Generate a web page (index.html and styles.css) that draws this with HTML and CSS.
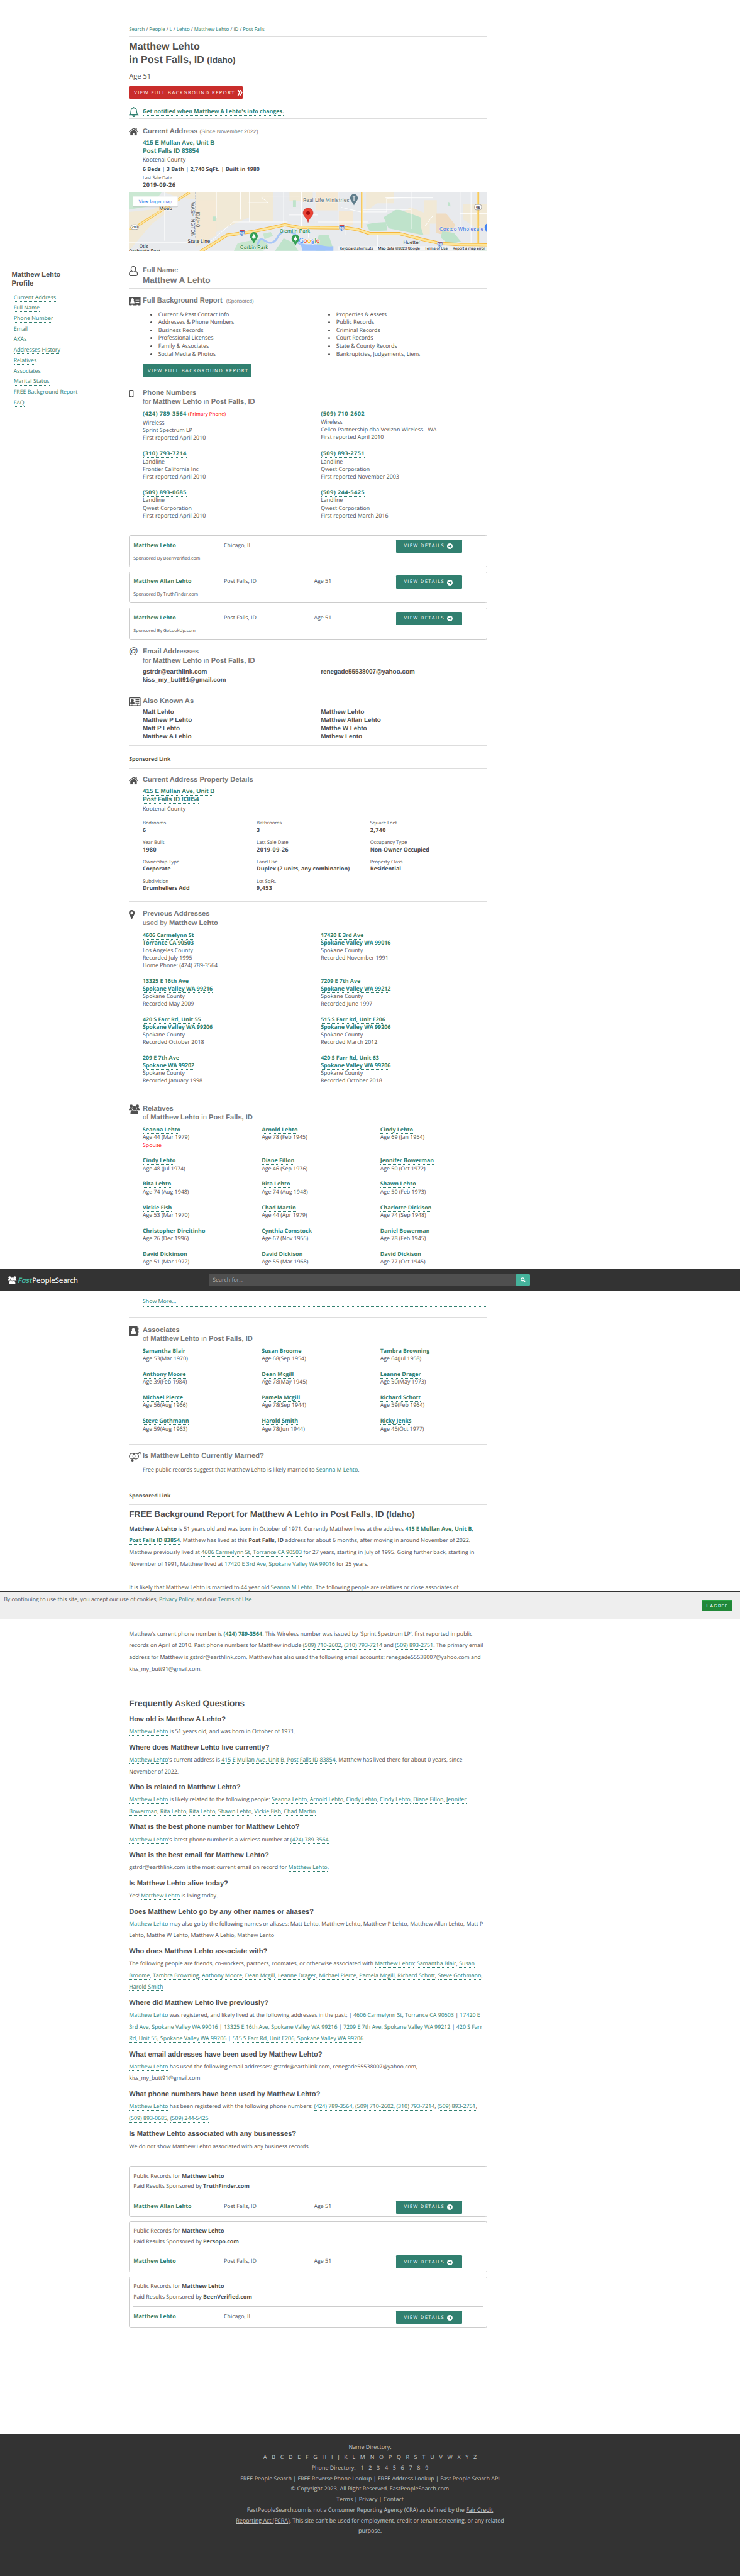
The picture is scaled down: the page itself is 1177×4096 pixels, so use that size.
FILE: index.html
```html
<!DOCTYPE html>
<html lang="en">
<head>
<meta charset="utf-8">
<title>Matthew Lehto in Post Falls, ID</title>
<link rel="stylesheet" href="styles.css">
</head>
<body>
<svg class="defs" width="0" height="0">
  <symbol id="home" viewBox="0 0 24 20"><path d="M12 0 0 10l1.4 1.7L12 3l10.600 8.700L24 10l-3.600-3.100V1h-3.400v3.100z"/><path d="M12 4.600 3.600 11.400V20h6.200v-6h4.400v6h6.200v-8.600z"/></symbol>
  <symbol id="users" viewBox="0 0 28 26"><circle cx="6" cy="4.500" r="4"/><circle cx="22" cy="4.500" r="4"/><path d="M0 15c0-4 2-6 6-6 1 0 1.500.2 1.500.2-.3 3 .5 4.800 1.500 5.800H1.500C.5 15 0 15 0 15zM28 15c0-4-2-6-6-6-1 0-1.500.2-1.500.2.3 3-.5 4.800-1.500 5.800h7.500c1 0 1.500 0 1.500 0z"/><circle cx="14" cy="10" r="5.500"/><path d="M4 23c0-5 2-8 5.500-8 2 2 7 2 9 0C22 15 24 18 24 23c0 2-1 3-3 3H7c-2 0-3-1-3-3z"/></symbol>
  <symbol id="arrow" viewBox="0 0 14 14"><circle class="disc" cx="7" cy="7" r="7"/><path class="tip" d="M3.500 7h6M7 3.800 10.200 7 7 10.200"/></symbol>
</svg>

<div class="layout">
<aside class="side">
  <h4>Matthew Lehto<br>Profile</h4>
  <ul>
    <li><a>Current Address</a></li><li><a>Full Name</a></li><li><a>Phone Number</a></li><li><a>Email</a></li><li><a>AKAs</a></li><li><a>Addresses History</a></li><li><a>Relatives</a></li><li><a>Associates</a></li><li><a>Marital Status</a></li><li><a>FREE Background Report</a></li><li><a>FAQ</a></li>
  </ul>
</aside>
<main class="main">

<nav class="block crumbs"><a>Search</a> / <a>People</a> / <a>L</a> / <a>Lehto</a> / <a>Matthew Lehto</a> / <a>ID</a> / <a>Post Falls</a></nav>

<header class="block title"><h1>Matthew Lehto<br>in Post Falls, ID <small>(Idaho)</small></h1></header>

<section class="block intro">
  <p class="age">Age 51</p>
  <a class="btn red"><span>VIEW FULL BACKGROUND REPORT</span>
    <svg viewBox="0 0 14 14"><path d="M1 0h3.500l4 7-4 7H1l4-7zM6.500 0H10l4 7-4 7H6.500l4-7z"/></svg></a>
  <div class="notify">
    <svg viewBox="0 0 25 26"><path d="M2 20.500c3-3 3-6 3.200-10C5.500 5.500 8 2.500 12.500 2.500s7 3 7.300 8c.2 4 .2 7 3.200 10z"/><path d="M12.500 2.500V0"/><path class="fill" d="M8.500 21.500h8c0 3-2 4.500-4 4.500s-4-1.500-4-4.500z"/></svg>
    <a>Get notified when Matthew A Lehto's info changes.</a>
  </div>
</section>

<section class="block current">
  <div class="row">
    <div class="ico"><svg class="i-home"><use href="#home"/></svg></div>
    <div class="body">
      <h2>Current Address <span class="note">(Since November 2022)</span></h2>
      <p class="addr"><a>415 E Mullan Ave, Unit B</a><br><a>Post Falls ID 83854</a></p>
      <p class="county">Kootenai County</p>
      <p class="facts"><b>6 Beds</b> <i>|</i> <b>3 Bath</b> <i>|</i> <b>2,740 SqFt.</b> <i>|</i> <b>Built in 1980</b></p>
      <p class="sale">Last Sale Date</p>
      <p class="date">2019-09-26</p>
    </div>
  </div>
  <svg class="map" viewBox="0 0 922 150" preserveAspectRatio="none">
    <rect width="922" height="150" fill="#e8eaed"/>
    <path fill="#f1e9d6" d="M0 50 60 44 92 30 92 56 60 80 0 150zM225 0H310V64L268 82 225 102 190 128H172V0zM310 0H372V74H310zM413 0h60v22h-60zM610 0h72v28h-44l-28 20zM690 60l34-22 50 20v50h-40zM760 20h32v60h-32zM860 30h62v60h-30l-32-20zM92 0h78v18l-44-6z"/>
    <path fill="#f4e8d4" d="M480 0h58v46h-58zM540 48h36v36h-36zM172 20h53v90l-53 30z"/>
    <path fill="#efdcc2" d="M790 54h26l24 30-20 28-30-8z"/>
    <path fill="#cbe8d3" d="M0 0h84l-24 30-10 6L0 44z"/>
    <path fill="#bfe3cb" d="M655 64 690 42l60 22 2 28 6 18-90-18zM610 82l22-4 30-2 2 22-44 2zM806 100l30 4 18 22-30 8-22-18zM488 110h26l10 30-20 10h-24zM398 118l24 10 14 22h-60zM215 62h9v11h-9zM422 20h8v17h-8zM820 24l6 2 1 10-6-1zM900 138h22v12h-22z"/>
    <path fill="#c8e6cf" d="M280 130l60-12 20 18-14 14h-76zM345 106l20-4 6 10-22 8z"/>
    <path fill="none" stroke="#a9c7f7" stroke-width="5" d="M330 140c4-24 12-22 20-16 12 10 26 6 34-12 8-14 28-12 42-6 10 6 6 20 10 24l14 8"/>
    <path fill="#9fc3fb" d="M442 130c14 6 30 2 42 4 16 2 26 6 42 4v12h-80z"/>
    <g fill="none" stroke="#fff" stroke-width="1.500">
      <path d="M225 0v66M287 0v70M310 0v76M340 12h100M340 12l18 14h-50M398 0v100M444 0v90M481 0v84M412 58h74M412 43h60M538 0v92M545 38l50 12 68 0 0-35 60-2M600 44h126v-44M726 44v50M660 14h122M782 0v60l-20 26M268 76h140M268 76l-60 52H0M92 0v124M880 0v130l-20 0M852 0v90M922 54h-70M640 108v42M486 76h130M556 80v30M462 92v24"/>
    </g>
    <path fill="none" stroke="#9aa0a6" stroke-width="1" stroke-dasharray="4 3" d="M171 0v118"/>
    <g fill="none" stroke-linejoin="round">
      <path stroke="#f7c24a" stroke-width="6" d="M0 94 22 86 156 0M600 0v92M898 0v136"/>
      <path stroke="#fbe5a6" stroke-width="3" d="M0 94 22 86 156 0M600 0v92M898 0v136"/>
      <path stroke="#f5b63c" stroke-width="8" d="M184 152 252 110 316 101 370 90 401 83 440 90 559 91 590 96 620 106 697 106 760 122 802 131 850 134 922 135"/>
      <path stroke="#fde69b" stroke-width="5" d="M184 152 252 110 316 101 370 90 401 83 440 90 559 91 590 96 620 106 697 106 760 122 802 131 850 134 922 135"/>
    </g>
    <g fill="#4274c4" stroke="#fff"><path d="M284 97h14v9q-2 5-7 6-5-1-7-6zM540.500 84h14v9q-2 5-7 6-5-1-7-6zM793 126h14v9q-2 5-7 6-5-1-7-6z"/></g>
    <g fill="#d64545"><path d="M285 97h12v2.500h-12zM541.500 84h12v2.500h-12zM794 126h12v2.500h-12z"/></g>
    <g fill="#fff" stroke="#777"><rect x="5" y="83" width="20" height="12" rx="6"/><rect x="889" y="31" width="18" height="14" rx="5"/></g>
    <g class="halo t12">
      <text x="78" y="45" fill="#333">Moab</text>
      <text x="151" y="129" fill="#333">State Line</text>
      <text x="27" y="143" fill="#333">Otis</text>
      <text x="0" y="156" fill="#333">Orchards East</text>
      <text x="706" y="133" fill="#333">Huetter</text>
    </g>
    <g class="halo t13">
      <text x="448" y="24" fill="#5c757f" textLength="119">Real Life Ministries</text>
      <text x="388" y="104" fill="#22813f" textLength="78">Q'emiln Park</text>
      <text x="286" y="146" fill="#22813f" textLength="72">Corbin Park</text>
      <text x="799" y="98" fill="#3a6fdc" textLength="113">Costco Wholesale</text>
    </g>
    <g class="state"><text transform="translate(160 24) rotate(90)" textLength="90">WASHINGTON</text><text transform="translate(173 49) rotate(90)" textLength="41">IDAHO</text></g>
    <g class="num"><text x="15" y="92.500" fill="#444">290</text><text x="898" y="41.500" fill="#444">95</text><text x="291" y="108" fill="#fff">90</text><text x="547.500" y="95" fill="#fff">90</text><text x="800" y="137" fill="#fff">90</text></g>
    <path fill="#607d8b" d="M579 4c6 0 10 5 10 11 0 5-6 9-10 18-4-9-10-13-10-18 0-6 4-11 10-11z"/><path stroke="#fff" stroke-width="1.800" d="M579 8v13M575 12h8"/>
    <path fill="#34a053" d="M321.500 102c6 0 10 5 10 11 0 5-6 9-10 18-4-9-10-13-10-18 0-6 4-11 10-11zM428.500 108c6 0 10 5 10 11 0 5-6 9-10 18-4-9-10-13-10-18 0-6 4-11 10-11z"/>
    <path fill="#fff" d="M321.500 106l5 10h-4v3h-2v-3h-4zM428.500 112l5 10h-4v3h-2v-3h-4z"/>
    <path fill="#ea4335" stroke="#b3261e" stroke-width=".8" d="M461 40c8 0 13 6 13 13 0 8-10 12-13 24-3-12-13-16-13-24 0-7 5-13 13-13z"/><circle cx="461" cy="53" r="5" fill="#a50e0e"/>
    <path fill="#4285f4" d="M922 79c-5 2-7 6-7 11s3 8 7 15z"/>
    <text class="google" x="437" y="129"><tspan fill="#4285f4">G</tspan><tspan fill="#ea4335">o</tspan><tspan fill="#fbbc05">o</tspan><tspan fill="#4285f4">g</tspan><tspan fill="#34a853">l</tspan><tspan fill="#ea4335">e</tspan></text>
    <rect x="538" y="138" width="384" height="12" fill="#f5f5f5" opacity=".8"/>
    <g class="attr"><text x="542" y="147.500" textLength="86">Keyboard shortcuts</text><text x="641" y="147.500" textLength="108">Map data ©2023 Google</text><text x="761" y="147.500" textLength="59">Terms of Use</text><text x="833" y="147.500" textLength="83">Report a map error</text></g>
    <rect x="9.700" y="10.500" width="116" height="27" rx="2" fill="#000" opacity=".15"/>
    <rect x="9.700" y="10" width="116" height="26" rx="2" fill="#fff"/>
    <text class="larger" x="25" y="27.500" textLength="86">View larger map</text>
  </svg>
</section>

<section class="block row fullname">
  <div class="ico"><svg class="i-user" viewBox="0 0 23 26"><path d="M11.500 1C8 1 5.500 3.800 5.500 7.500S8 15 11.500 15s6-3.800 6-7.500S15 1 11.500 1z"/><path d="M6.500 13C3 13.500 1 16.500 1 21c0 2.500 1.500 4 4 4h13c2.500 0 4-1.500 4-4 0-4.500-2-7.500-5.500-8"/></svg></div>
  <div class="body"><h2>Full Name:</h2><p class="big">Matthew A Lehto</p></div>
</section>

<section class="block row report">
  <div class="ico"><svg class="i-card solid" viewBox="0 0 30 23"><rect width="30" height="22" rx="2"/><path class="inv" d="M3.500 17c0-4 1-6 3-6.500a3.600 4 0 1 1 5 0c2 .5 3 2.500 3 6.500zM17 5h9.500v2H17zM17 9h9.500v2H17zM17 13h9.500v2H17zM7 20.500h3V23H7zM20 20.500h3V23h-3z"/></svg></div>
  <div class="body">
    <h2>Full Background Report <span class="spons">(Sponsored)</span></h2>
    <div class="two lists">
      <ul><li>Current &amp; Past Contact Info</li><li>Addresses &amp; Phone Numbers</li><li>Business Records</li><li>Professional Licenses</li><li>Family &amp; Associates</li><li>Social Media &amp; Photos</li></ul>
      <ul><li>Properties &amp; Assets</li><li>Public Records</li><li>Criminal Records</li><li>Court Records</li><li>State &amp; County Records</li><li>Bankruptcies, Judgements, Liens</li></ul>
    </div>
    <a class="btn wide"><span>VIEW FULL BACKGROUND REPORT</span></a>
  </div>
</section>

<section class="block row phones">
  <div class="ico"><svg class="i-phone" viewBox="0 0 12 19"><rect width="12" height="19" rx="2"/><path class="inv" d="M1.500 3h9v11.500h-9zM4.800 16h2.400v1.800H4.800z"/></svg></div>
  <div class="body">
    <h2>Phone Numbers<br><span>for</span> Matthew Lehto <span>in</span> Post Falls, ID</h2>
    <div class="two people">
      <p><a>(424) 789-3564</a> <em>(Primary Phone)</em><br>Wireless<br>Sprint Spectrum LP<br>First reported April 2010</p>
      <p><a>(509) 710-2602</a><br>Wireless<br>Cellco Partnership dba Verizon Wireless - WA<br>First reported April 2010</p>
      <p><a>(310) 793-7214</a><br>Landline<br>Frontier California Inc<br>First reported April 2010</p>
      <p><a>(509) 893-2751</a><br>Landline<br>Qwest Corporation<br>First reported November 2003</p>
      <p><a>(509) 893-0685</a><br>Landline<br>Qwest Corporation<br>First reported April 2010</p>
      <p><a>(509) 244-5425</a><br>Landline<br>Qwest Corporation<br>First reported March 2016</p>
    </div>
  </div>
</section>

<div class="cards top">
  <div class="card"><div class="line"><b>Matthew Lehto</b><span>Chicago, IL</span><span></span><a class="btn"><span>VIEW DETAILS</span><svg class="i-arrow"><use href="#arrow"/></svg></a></div><p>Sponsored By BeenVerified.com</p></div>
  <div class="card"><div class="line"><b>Matthew Allan Lehto</b><span>Post Falls, ID</span><span>Age 51</span><a class="btn"><span>VIEW DETAILS</span><svg class="i-arrow"><use href="#arrow"/></svg></a></div><p>Sponsored By TruthFinder.com</p></div>
  <div class="card"><div class="line"><b>Matthew Lehto</b><span>Post Falls, ID</span><span>Age 51</span><a class="btn"><span>VIEW DETAILS</span><svg class="i-arrow"><use href="#arrow"/></svg></a></div><p>Sponsored By GoLookUp.com</p></div>
</div>

<section class="block row emails">
  <div class="ico"><span class="at">@</span></div>
  <div class="body">
    <h2>Email Addresses<br><span>for</span> Matthew Lehto <span>in</span> Post Falls, ID</h2>
    <div class="two strong"><p>gstrdr@earthlink.com</p><p>renegade55538007@yahoo.com</p><p>kiss_my_butt91@gmail.com</p></div>
  </div>
</section>

<section class="block row akas">
  <div class="ico"><svg class="i-card" viewBox="0 0 30 23"><rect width="30" height="22.500" rx="2"/><path class="inv" d="M1.800 2h26.400v18H1.800z"/><path d="M3.500 17c0-4 1-6 3-6.500a3.600 4 0 1 1 5 0c2 .5 3 2.500 3 6.500zM17 5h9.500v1.800H17zM17 9.500h9.500v1.800H17zM17 14h9.500v1.800H17zM7 18.500h2V21H7zM21 18.500h2V21h-2z"/></svg></div>
  <div class="body">
    <h2>Also Known As</h2>
    <div class="two strong"><p>Matt Lehto</p><p>Matthew Lehto</p><p>Matthew P Lehto</p><p>Matthew Allan Lehto</p><p>Matt P Lehto</p><p>Matthe W Lehto</p><p>Matthew A Lehio</p><p>Mathew Lento</p></div>
  </div>
</section>

<section class="block sponsor first">Sponsored Link</section>

<section class="block row property">
  <div class="ico"><svg class="i-home"><use href="#home"/></svg></div>
  <div class="body">
    <h2>Current Address Property Details</h2>
    <p class="addr"><a>415 E Mullan Ave, Unit B</a><br><a>Post Falls ID 83854</a></p>
    <p class="county">Kootenai County</p>
    <dl>
      <div><dt>Bedrooms</dt><dd class="digits">6</dd></div><div><dt>Bathrooms</dt><dd class="digits">3</dd></div><div><dt>Square Feet</dt><dd class="digits">2,740</dd></div>
      <div><dt>Year Built</dt><dd class="digits">1980</dd></div><div><dt>Last Sale Date</dt><dd class="digits">2019-09-26</dd></div><div><dt>Occupancy Type</dt><dd>Non-Owner Occupied</dd></div>
      <div><dt>Ownership Type</dt><dd>Corporate</dd></div><div><dt>Land Use</dt><dd>Duplex (2 units, any combination)</dd></div><div><dt>Property Class</dt><dd>Residential</dd></div>
      <div><dt>Subdivision</dt><dd>Drumhellers Add</dd></div><div><dt>Lot SqFt.</dt><dd class="digits">9,453</dd></div>
    </dl>
  </div>
</section>

<section class="block row previous">
  <div class="ico"><svg class="i-pin" viewBox="0 0 15 23"><path fill-rule="evenodd" d="M7.500 0C12 0 15 3.200 15 7.500 15 12 10.500 16 8.800 22c-.4 1.300-2.200 1.300-2.600 0C4.500 16 0 12 0 7.500 0 3.200 3 0 7.500 0zm0 4a3.800 3.800 0 1 0 0 7.600 3.800 3.800 0 0 0 0-7.600z"/></svg></div>
  <div class="body">
    <h2>Previous Addresses<br><span>used by</span> Matthew Lehto</h2>
    <div class="two people">
      <p><a>4606 Carmelynn St</a><br><a>Torrance CA 90503</a><br>Los Angeles County<br>Recorded July 1995<br>Home Phone: (424) 789-3564</p>
      <p><a>17420 E 3rd Ave</a><br><a>Spokane Valley WA 99016</a><br>Spokane County<br>Recorded November 1991</p>
      <p><a>13325 E 16th Ave</a><br><a>Spokane Valley WA 99216</a><br>Spokane County<br>Recorded May 2009</p>
      <p><a>7209 E 7th Ave</a><br><a>Spokane Valley WA 99212</a><br>Spokane County<br>Recorded June 1997</p>
      <p><a>420 S Farr Rd, Unit 55</a><br><a>Spokane Valley WA 99206</a><br>Spokane County<br>Recorded October 2018</p>
      <p><a>515 S Farr Rd, Unit E206</a><br><a>Spokane Valley WA 99206</a><br>Spokane County<br>Recorded March 2012</p>
      <p><a>209 E 7th Ave</a><br><a>Spokane WA 99202</a><br>Spokane County<br>Recorded January 1998</p>
      <p><a>420 S Farr Rd, Unit 63</a><br><a>Spokane Valley WA 99206</a><br>Spokane County<br>Recorded October 2018</p>
    </div>
  </div>
</section>

<section class="block row relatives">
  <div class="ico"><svg class="i-users"><use href="#users"/></svg></div>
  <div class="body">
    <h2>Relatives<br><span>of</span> Matthew Lehto <span>in</span> Post Falls, ID</h2>
    <div class="three people">
      <p><a>Seanna Lehto</a><br>Age 44 (Mar 1979)<br><em>Spouse</em></p><p><a>Arnold Lehto</a><br>Age 78 (Feb 1945)</p><p><a>Cindy Lehto</a><br>Age 69 (Jan 1954)</p>
      <p><a>Cindy Lehto</a><br>Age 48 (Jul 1974)</p><p><a>Diane Fillon</a><br>Age 46 (Sep 1976)</p><p><a>Jennifer Bowerman</a><br>Age 50 (Oct 1972)</p>
      <p><a>Rita Lehto</a><br>Age 74 (Aug 1948)</p><p><a>Rita Lehto</a><br>Age 74 (Aug 1948)</p><p><a>Shawn Lehto</a><br>Age 50 (Feb 1973)</p>
      <p><a>Vickie Fish</a><br>Age 53 (Mar 1970)</p><p><a>Chad Martin</a><br>Age 44 (Apr 1979)</p><p><a>Charlotte Dickison</a><br>Age 74 (Sep 1948)</p>
      <p><a>Christopher Direitinho</a><br>Age 26 (Dec 1996)</p><p><a>Cynthia Comstock</a><br>Age 67 (Nov 1955)</p><p><a>Daniel Bowerman</a><br>Age 78 (Feb 1945)</p>
      <p><a>David Dickinson</a><br>Age 51 (Mar 1972)</p><p><a>David Dickison</a><br>Age 55 (Mar 1968)</p><p><a>David Dickison</a><br>Age 77 (Oct 1945)</p>
    </div>
    <a class="more">Show More...</a>
  </div>
</section>

<section class="block row associates">
  <div class="ico"><svg class="i-book" viewBox="0 0 25 27"><path d="M2 0h18c1.500 0 2 .7 2 2v2h2l1 1v4l-1 1h-1.500v2H24l1 1v4l-1 1h-1.500v2H24l.5 1v3l-.5 1h-2v1c0 1.300-.5 2-2 2H2c-1.300 0-2-.7-2-2V2C0 .7.700 0 2 0z"/><path class="inv" d="M11.500 6c-2.500 0-4 1.700-4 4 0 1.400.4 2.500 1.200 3.200C6 14 5 16 5 19c0 1.300.700 2 2 2h9c1.300 0 2-.7 2-2 0-3-1-5-3.700-5.800.8-.7 1.200-1.800 1.200-3.200 0-2.300-1.500-4-4-4z"/></svg></div>
  <div class="body">
    <h2>Associates<br><span>of</span> Matthew Lehto <span>in</span> Post Falls, ID</h2>
    <div class="three people">
      <p><a>Samantha Blair</a><br>Age 53(Mar 1970)</p><p><a>Susan Broome</a><br>Age 68(Sep 1954)</p><p><a>Tambra Browning</a><br>Age 64(Jul 1958)</p>
      <p><a>Anthony Moore</a><br>Age 39(Feb 1984)</p><p><a>Dean Mcgill</a><br>Age 78(May 1945)</p><p><a>Leanne Drager</a><br>Age 50(May 1973)</p>
      <p><a>Michael Pierce</a><br>Age 56(Aug 1966)</p><p><a>Pamela Mcgill</a><br>Age 78(Sep 1944)</p><p><a>Richard Schott</a><br>Age 59(Feb 1964)</p>
      <p><a>Steve Gothmann</a><br>Age 59(Aug 1963)</p><p><a>Harold Smith</a><br>Age 78(Jun 1944)</p><p><a>Ricky Jenks</a><br>Age 45(Oct 1977)</p>
    </div>
  </div>
</section>

<section class="block row married">
  <div class="ico"><svg class="i-gender" viewBox="0 0 30 27"><circle cx="8.500" cy="12" r="7.300"/><circle cx="17.500" cy="12" r="7.300"/><path d="M8.500 19.500V27M5 23.500h7M23 7l6-6M23.500 1H29v6"/></svg></div>
  <div class="body"><h2>Is Matthew Lehto Currently Married?</h2><p>Free public records suggest that Matthew Lehto is likely married to <a>Seanna M Lehto</a>.</p></div>
</section>

<section class="block sponsor">Sponsored Link</section>

<section class="block free">
  <h3>FREE Background Report for Matthew A Lehto in Post Falls, ID (Idaho)</h3>
  <p><b>Matthew A Lehto</b> is 51 years old and was born in October of 1971. Currently Matthew lives at the address <a><b>415 E Mullan Ave, Unit B,<br>Post Falls ID 83854</b></a>. Matthew has lived at this <b>Post Falls, ID</b> address for about 6 months, after moving in around November of 2022.<br>Matthew previously lived at <a>4606 Carmelynn St, Torrance CA 90503</a> for 27 years, starting in July of 1995. Going further back, starting in<br>November of 1991, Matthew lived at <a>17420 E 3rd Ave, Spokane Valley WA 99016</a> for 25 years.</p>
  <p class="kin">It is likely that Matthew Lehto is married to 44 year old <a>Seanna M Lehto</a>. The following people are relatives or close associates of</p>
  <p class="contact">Matthew's current phone number is <a><b>(424) 789-3564</b></a>. This Wireless number was issued by 'Sprint Spectrum LP', first reported in public<br>records on April of 2010. Past phone numbers for Matthew include <a>(509) 710-2602</a>, <a>(310) 793-7214</a> and <a>(509) 893-2751</a>. The primary email<br>address for Matthew is gstrdr@earthlink.com. Matthew has also used the following email accounts: renegade55538007@yahoo.com and<br>kiss_my_butt91@gmail.com.</p>
</section>

<section class="faq">
  <h3>Frequently Asked Questions</h3>
  <h4>How old is Matthew A Lehto?</h4>
  <p><a>Matthew Lehto</a> is 51 years old, and was born in October of 1971.</p>
  <h4>Where does Matthew Lehto live currently?</h4>
  <p><a>Matthew Lehto</a>'s current address is <a>415 E Mullan Ave, Unit B, Post Falls ID 83854</a>. Matthew has lived there for about 0 years, since<br>November of 2022.</p>
  <h4>Who is related to Matthew Lehto?</h4>
  <p><a>Matthew Lehto</a> is likely related to the following people: <a>Seanna Lehto</a>, <a>Arnold Lehto</a>, <a>Cindy Lehto</a>, <a>Cindy Lehto</a>, <a>Diane Fillon</a>, <a>Jennifer<br>Bowerman</a>, <a>Rita Lehto</a>, <a>Rita Lehto</a>, <a>Shawn Lehto</a>, <a>Vickie Fish</a>, <a>Chad Martin</a></p>
  <h4>What is the best phone number for Matthew Lehto?</h4>
  <p><a>Matthew Lehto</a>'s latest phone number is a wireless number at <a>(424) 789-3564</a>.</p>
  <h4>What is the best email for Matthew Lehto?</h4>
  <p>gstrdr@earthlink.com is the most current email on record for <a>Matthew Lehto</a>.</p>
  <h4>Is Matthew Lehto alive today?</h4>
  <p>Yes! <a>Matthew Lehto</a> is living today.</p>
  <h4>Does Matthew Lehto go by any other names or aliases?</h4>
  <p><a>Matthew Lehto</a> may also go by the following names or aliases: Matt Lehto, Matthew Lehto, Matthew P Lehto, Matthew Allan Lehto, Matt P<br>Lehto, Matthe W Lehto, Matthew A Lehio, Mathew Lento</p>
  <h4>Who does Matthew Lehto associate with?</h4>
  <p>The following people are friends, co-workers, partners, roomates, or otherwise associated with <a>Matthew Lehto</a>: <a>Samantha Blair</a>, <a>Susan<br>Broome</a>, <a>Tambra Browning</a>, <a>Anthony Moore</a>, <a>Dean Mcgill</a>, <a>Leanne Drager</a>, <a>Michael Pierce</a>, <a>Pamela Mcgill</a>, <a>Richard Schott</a>, <a>Steve Gothmann</a>,<br><a>Harold Smith</a></p>
  <h4>Where did Matthew Lehto live previously?</h4>
  <p><a>Matthew Lehto</a> was registered, and likely lived at the following addresses in the past: | <a>4606 Carmelynn St, Torrance CA 90503</a> | <a>17420 E<br>3rd Ave, Spokane Valley WA 99016</a> | <a>13325 E 16th Ave, Spokane Valley WA 99216</a> | <a>7209 E 7th Ave, Spokane Valley WA 99212</a> | <a>420 S Farr<br>Rd, Unit 55, Spokane Valley WA 99206</a> | <a>515 S Farr Rd, Unit E206, Spokane Valley WA 99206</a></p>
  <h4>What email addresses have been used by Matthew Lehto?</h4>
  <p><a>Matthew Lehto</a> has used the following email addresses: gstrdr@earthlink.com, renegade55538007@yahoo.com,<br>kiss_my_butt91@gmail.com</p>
  <h4>What phone numbers have been used by Matthew Lehto?</h4>
  <p><a>Matthew Lehto</a> has been registered with the following phone numbers: <a>(424) 789-3564</a>, <a>(509) 710-2602</a>, <a>(310) 793-7214</a>, <a>(509) 893-2751</a>,<br><a>(509) 893-0685</a>, <a>(509) 244-5425</a></p>
  <h4>Is Matthew Lehto associated wth any businesses?</h4>
  <p>We do not show Matthew Lehto associated with any business records</p>
</section>

<div class="cards records">
  <div class="card"><div class="head">Public Records for <b>Matthew Lehto</b><br>Paid Results Sponsored by <b>TruthFinder.com</b></div><div class="line"><b>Matthew Allan Lehto</b><span>Post Falls, ID</span><span>Age 51</span><a class="btn"><span>VIEW DETAILS</span><svg class="i-arrow"><use href="#arrow"/></svg></a></div></div>
  <div class="card"><div class="head">Public Records for <b>Matthew Lehto</b><br>Paid Results Sponsored by <b>Persopo.com</b></div><div class="line"><b>Matthew Lehto</b><span>Post Falls, ID</span><span>Age 51</span><a class="btn"><span>VIEW DETAILS</span><svg class="i-arrow"><use href="#arrow"/></svg></a></div></div>
  <div class="card"><div class="head">Public Records for <b>Matthew Lehto</b><br>Paid Results Sponsored by <b>BeenVerified.com</b></div><div class="line"><b>Matthew Lehto</b><span>Chicago, IL</span><span></span><a class="btn"><span>VIEW DETAILS</span><svg class="i-arrow"><use href="#arrow"/></svg></a></div></div>
</div>
</main>
</div>

<footer class="footer">
  <p>Name Directory:</p>
  <p class="az"><span>A</span><span>B</span><span>C</span><span>D</span><span>E</span><span>F</span><span>G</span><span>H</span><span>I</span><span>J</span><span>K</span><span>L</span><span>M</span><span>N</span><span>O</span><span>P</span><span>Q</span><span>R</span><span>S</span><span>T</span><span>U</span><span>V</span><span>W</span><span>X</span><span>Y</span><span>Z</span></p>
  <p class="az"><span>Phone Directory:</span><span>1</span><span>2</span><span>3</span><span>4</span><span>5</span><span>6</span><span>7</span><span>8</span><span>9</span></p>
  <p>FREE People Search | FREE Reverse Phone Lookup | FREE Address Lookup | Fast People Search API</p>
  <p>© Copyright 2023. All Right Reserved. FastPeopleSearch.com</p>
  <p>Terms | Privacy | Contact</p>
  <p>FastPeopleSearch.com is not a Consumer Reporting Agency (CRA) as defined by the <u>Fair Credit</u><br><u>Reporting Act (FCRA)</u>. This site can't be used for employment, credit or tenant screening, or any related<br>purpose.</p>
</footer>

<div class="topbar">
  <div class="logo"><svg><use href="#users"/></svg><span><b>Fast</b>PeopleSearch</span></div>
  <div class="search"><span>Search for...</span><button><svg viewBox="0 0 12 12"><circle cx="4.800" cy="4.800" r="3.600"/><path d="M7.500 7.500 11 11"/></svg></button></div>
</div>

<div class="cookies">
  <p>By continuing to use this site, you accept our use of cookies, <a>Privacy Policy</a>, and our <a>Terms of Use</a></p>
  <button>I AGREE</button>
</div>
</body>
</html>
```
FILE: styles.css
```css
/* 1rem stands for ten design pixels */
html { font-size: 6.1836px; }
* { box-sizing: border-box; margin: 0; padding: 0; }
body {
  position: relative;
  background: #fff;
  color: #505050;
  font-family: "Open Sans", "Noto Sans", sans-serif;
  font-size: 1.43rem;
  line-height: 2rem;
  text-rendering: geometricPrecision;
  white-space: nowrap;
}
ul { list-style: none; }
em { font-style: normal; color: #f00; }
a { color: #318070; border-bottom: 1px dotted #318070; }
.defs { position: absolute; }
h1, h2, h3, h4 { font-family: "Liberation Sans", Arial, sans-serif; font-weight: bold; }

.layout { display: flex; }
.side { width: 33.2rem; padding: 69.55rem 0 0 3rem; }
.side h4 { font-size: 1.8rem; line-height: 2.28rem; }
.side ul { padding: 1.03rem 0 0 .5rem; }
.side li { line-height: 2.7rem; font-size: 1.43rem; }
.main { width: 92.2rem; }

.block { border-bottom: 1px solid #ddd; }
.row { display: flex; }
.ico { width: 3.5rem; flex: none; }
.ico svg { display: block; fill: #505050; }
.ico .inv { fill: #fff; }
.body { flex: 1; }
.body > h2 { font-size: 1.8rem; line-height: 2.4rem; color: #777; }
.body > h2 span { font-weight: normal; }
.two { display: grid; grid-template-columns: 45.8rem 1fr; }
.three { display: grid; grid-template-columns: 30.6rem 30.5rem 1fr; }
.people { row-gap: 2rem; }
.people a { font-weight: bold; }
.people em { font-size: 1.3rem; }
.three em { font-size: 1.43rem; }
.addr { font: bold 1.6rem/2.01rem "Liberation Sans", Arial, sans-serif; }
.strong { font: bold 1.6rem/2.1rem "Liberation Sans", Arial, sans-serif; }

.btn {
  display: inline-flex; align-items: center;
  background: #318070; color: #fff;
  border: 0; border-radius: .2rem;
  font-size: 1.23rem; letter-spacing: .235rem;
}

.crumbs { height: 9.6rem; padding-top: 6.56rem; font-size: 1.28rem; }
.title { height: 8.58rem; padding-top: .77rem; border-color: #888; }
.title h1 { font-size: 2.6rem; line-height: 3.4rem; }
.title small { font-size: 2.2rem; }
.intro { height: 12.41rem; padding-top: .48rem; }
.age { font-size: 1.8rem; line-height: 2.4rem; }
.btn.red { display: flex; width: 29.3rem; height: 3.28rem; margin-top: 1.13rem; padding: .3rem 0 0 1.3rem; background: #c92d2b; }
.btn.red svg { width: 1.4rem; height: 1.4rem; margin: -.3rem 0 0 .5rem; fill: #fff; }
.notify { display: flex; height: 2.6rem; margin-top: 2.03rem; line-height: 2.3rem; font-weight: bold; }
.notify svg { width: 2.5rem; height: 2.6rem; margin-right: 1rem; fill: none; stroke: #318070; stroke-width: 2; }
.notify .fill { fill: #318070; stroke: none; }
.notify a { align-self: flex-start; line-height: 2rem; margin-top: .1rem; }

.current { height: 35.83rem; padding-top: 2.01rem; }
.i-home { width: 2.4rem; height: 2rem; margin-top: .3rem; }
.note { font-size: 1.43rem; }
.current .addr { margin-top: .94rem; }
.county { line-height: 2.1rem; margin-top: .1rem; }
.facts { margin-top: .2rem; line-height: 2.4rem; }
.facts i { font-style: normal; }
.sale { margin-top: .19rem; font-size: 1.16rem; line-height: 1.8rem; }
.date { font-weight: bold; line-height: 1.7rem; font-size: 1.48rem; letter-spacing: .08rem; }
.map { display: block; width: 92.2rem; height: 15rem; margin-top: 1.08rem; font-family: Roboto, sans-serif; }
.halo text { paint-order: stroke; stroke: #fff; stroke-width: 1.6px; stroke-opacity: .7; }
.t12 { font-size: 13px; }
.t13 { font-size: 13.5px; }
.state { font-size: 13px; fill: #555; }
.num { font-size: 9.5px; font-weight: bold; text-anchor: middle; }
.google { font-size: 17px; font-family: Lato, sans-serif; paint-order: stroke; stroke: #fff; stroke-width: 1.5px; }
.attr { font-size: 10px; fill: #111; }
.larger { font-size: 12px; fill: #1a73e8; }

.fullname { height: 7.77rem; padding-top: 1.95rem; }
.i-user { width: 2.3rem; height: 2.6rem; }
.ico .i-user { fill: none; stroke: #505050; stroke-width: 2; }
.big { font: bold 2.2rem/2.5rem "Liberation Sans", Arial, sans-serif; color: #777; }

.report { height: 23.7rem; padding-top: 2.04rem; }
.i-card { width: 3rem; height: 2.3rem; margin-top: .15rem; }
.report .spons { font-size: 1.29rem; margin-left: .5rem; }
.lists { margin-top: 1.04rem; }
.lists ul { padding-left: 4rem; list-style: disc; }
.lists li { line-height: 2.04rem; }
.lists li::marker { font-size: 1.5rem; }
.btn.wide { display: flex; width: 28rem; height: 3.26rem; margin-top: 1.59rem; padding: .2rem 0 0 1.3rem; }

.phones { height: 38.72rem; padding-top: 2.09rem; }
.phones h2 { line-height: 2.3rem; }
.i-phone { width: 1.2rem; height: 1.9rem; margin-top: .25rem; }
.phones .people { margin-top: .92rem; }
.phones a { font-size: 1.5rem; line-height: 1.8rem; letter-spacing: .06rem; }

.cards.top { display: grid; row-gap: 1.1rem; margin-top: 1.05rem; }
.card { border: 1px solid #ccc; border-radius: .4rem; padding-left: .95rem; }
.line { display: grid; grid-template-columns: 23.27rem 23.2rem 21.03rem 17rem; line-height: 3.2rem; }
.line b { color: #318070; }
.line .btn { height: 3.4rem; padding: .2rem 0 0 2.1rem; letter-spacing: .21rem; }
.i-arrow { width: 1.45rem; height: 1.45rem; margin-left: .7rem; }
.disc { fill: #fff; }
.tip { fill: none; stroke: #318070; stroke-width: 2; }
.top .card { height: 8.2rem; padding-top: .9rem; }
.top p { font-size: 1.15rem; margin-top: .45rem; }

.emails { height: 12.72rem; padding-top: 1.94rem; }
.at { display: block; margin-left: -.1rem; font: 2.4rem/2.4rem "Liberation Sans", Arial, sans-serif; }
.emails .strong { margin-top: .72rem; }
.akas { height: 14.63rem; padding-top: 1.99rem; }
.akas .strong { margin-top: .71rem; }
.sponsor { height: 5.85rem; padding-top: 2.43rem; font-weight: bold; font-size: 1.4rem; }
.sponsor.first { height: 5.78rem; padding-top: 2.39rem; }

.property { height: 34.4rem; padding-top: 1.88rem; }
.property .addr { margin-top: .78rem; line-height: 2.1rem; }
dl { display: grid; grid-template-columns: 29.3rem 29.2rem 1fr; row-gap: 1.5rem; margin-top: 1.82rem; line-height: 1.75rem; }
dt { font-size: 1.25rem; }
dd { font-weight: bold; }
.digits { letter-spacing: .08rem; }

.previous { height: 49.89rem; padding-top: 1.89rem; }
.i-pin { width: 1.5rem; height: 2.3rem; margin-top: .15rem; }
.previous .people { margin-top: .8rem; row-gap: 1.97rem; line-height: 1.97rem; }

.relatives { height: 56.92rem; padding-top: 2.07rem; }
.relatives h2 { line-height: 2.3rem; }
.i-users { width: 2.8rem; height: 2.6rem; }
.relatives .people { margin-top: .93rem; }
.more { display: block; margin-top: 8.06rem; height: 2.6rem; line-height: 2.4rem; }

.associates { height: 32.62rem; padding-top: 2.05rem; }
.associates h2 { line-height: 2.28rem; }
.i-book { width: 2.5rem; height: 2.7rem; }
.associates .people { margin-top: .99rem; }

.married { height: 9.77rem; padding-top: 1.88rem; }
.i-gender { width: 3rem; height: 2.7rem; }
.ico .i-gender { fill: none; stroke: #505050; stroke-width: 2; }
.married p { margin-top: 1.3rem; }

.free h3, .faq h3 { font-size: 2.2rem; line-height: 2.6rem; }
.free { height: 48.62rem; padding-top: 1.09rem; }
.free p { line-height: 3rem; margin-top: .97rem; }
.free .kin { margin-top: 3rem; }
.free .contact { margin-top: 9rem; }

.faq { height: 121.34rem; padding-top: 1.18rem; }
.faq h3 { margin-bottom: 1.26rem; }
.faq h4 { font-size: 1.8rem; line-height: 3.14rem; }
.faq p { line-height: 3rem; margin-bottom: 1.097rem; }

.cards.records { display: grid; row-gap: 1.05rem; }
.records .card { height: 13.16rem; padding: 1rem 1rem 0 .95rem; }
.head { height: 6.6rem; padding-top: .05rem; line-height: 2.7rem; border-bottom: 1px solid #ccc; margin-bottom: 1.05rem; }

.footer { height: 36.6rem; margin-top: 27.32rem; padding-top: 2.02rem; background: #333; color: #c4c4c4; text-align: center; line-height: 2.7rem; font-size: 1.45rem; }
.az { display: flex; justify-content: center; gap: 1.25rem; }

/* sticky header, over the page where the viewport was */
.topbar { position: absolute; left: 0; top: 326.38rem; width: 100%; height: 5.7rem; background: #333; }
.topbar { display: flex; align-items: center; padding-left: 1.9rem; }
.logo { display: flex; align-items: center; width: 51.9rem; color: #fff; font-size: 1.92rem; letter-spacing: -.04rem; }
.logo svg { width: 2.4rem; height: 2.1rem; margin-right: .3rem; fill: #fff; }
.logo b { color: #45b39c; font-style: italic; }
.search { display: flex; width: 82.6rem; height: 3.1rem; background: #4f4f4f; color: #b0b0b0; line-height: 3.1rem; padding-left: .9rem; margin-top: -.2rem; }
.search span { flex: 1; }
.search button { width: 3.8rem; border: 0; border-radius: .3rem; background: #45b39c; display: flex; align-items: center; justify-content: center; }
.search svg { width: 1.3rem; height: 1.3rem; fill: none; stroke: #fff; stroke-width: 2; }

.cookies { position: absolute; left: 0; top: 409.2rem; width: 100%; height: 7.07rem; background: #eee; border-top: 1px solid #333; display: flex; justify-content: space-between; padding: 0 2rem 0 1rem; }
.cookies p { font-size: 1.42rem; line-height: 2rem; margin-top: .95rem; }
.cookies a { border: 0; }
.cookies button { width: 7.8rem; height: 2.9rem; margin-top: 2.05rem; background: #218838; border: 1px solid #28a745; color: #fff; font: 1.25rem "Open Sans", sans-serif; letter-spacing: .15rem; }
```
